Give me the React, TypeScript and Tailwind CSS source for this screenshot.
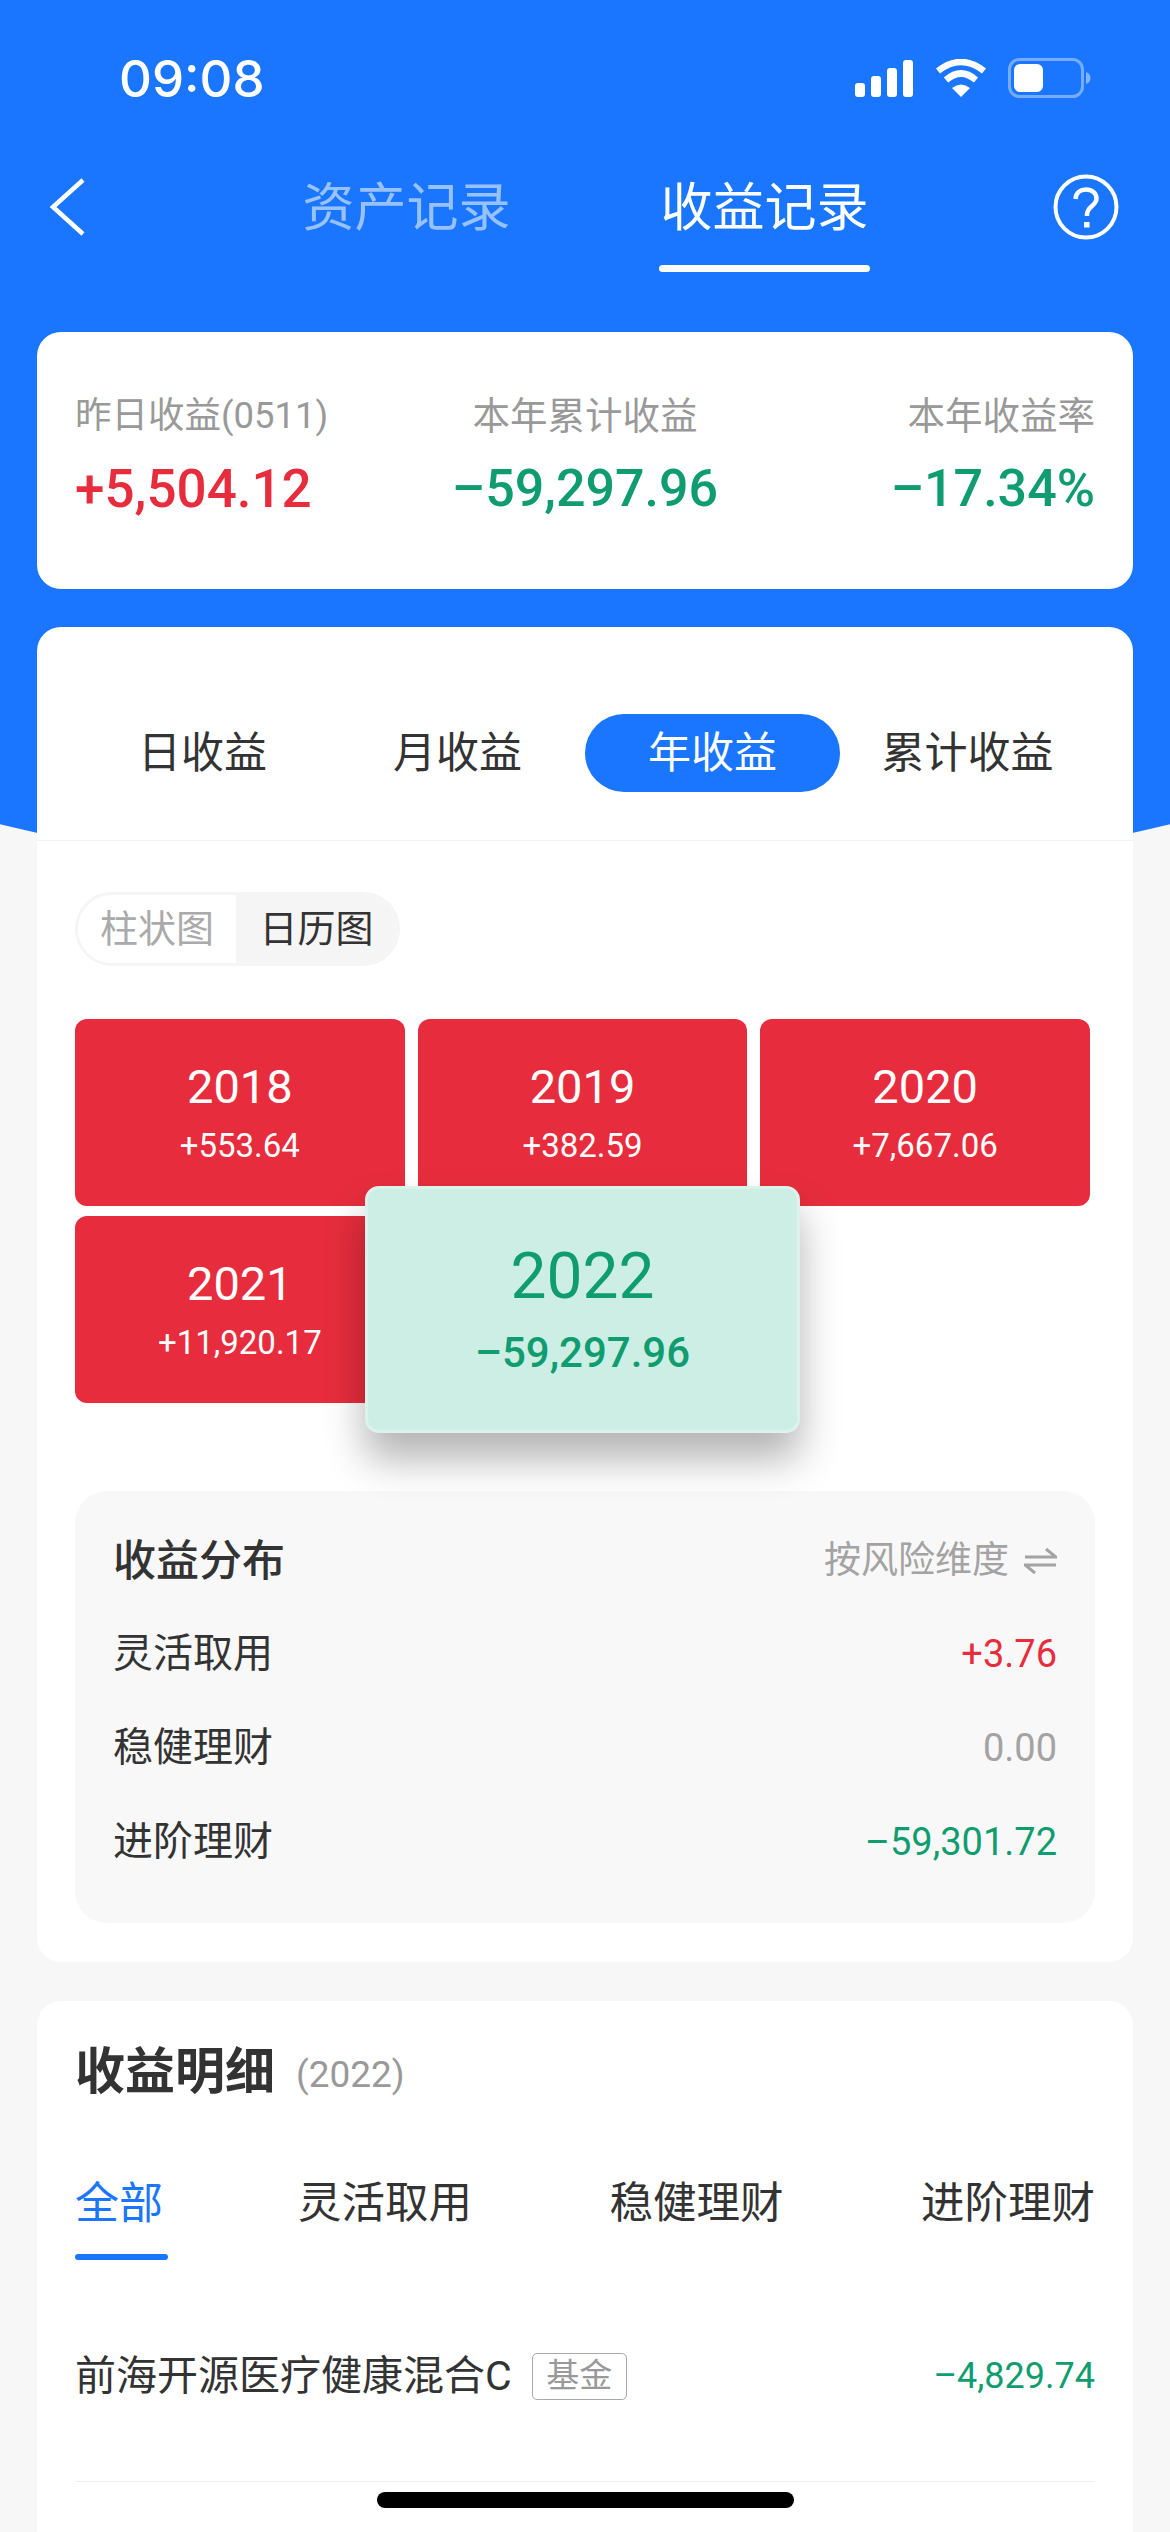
import React from "react";

const cjk = "font-['Roboto','Noto_Sans_CJK_SC',sans-serif]";

const years = [
  { year: "2018", value: "+553.64" },
  { year: "2019", value: "+382.59" },
  { year: "2020", value: "+7,667.06" },
  { year: "2021", value: "+11,920.17" },
];

const dist = [
  { name: "灵活取用", value: "+3.76", color: "text-[#e72d3d]" },
  { name: "稳健理财", value: "0.00", color: "text-[#a3a3a3]" },
  { name: "进阶理财", value: "–59,301.72", color: "text-[#0f9d70]" },
];

const StatusIcons = () => (
  <div className="flex items-center">
    <svg width="58" height="37" viewBox="0 0 58 37" fill="#fff">
      <rect x="0" y="23" width="10" height="14" rx="3" />
      <rect x="16" y="16" width="10" height="21" rx="3" />
      <rect x="32" y="8" width="10" height="29" rx="3" />
      <rect x="48" y="0" width="10" height="37" rx="3" />
    </svg>
    <svg className="ml-[22px]" width="52" height="38" viewBox="0 0 52 38" fill="none" stroke="#fff">
      <path d="M3 12Q26-6 49 12" strokeWidth="6.5" />
      <path d="M11 21Q26 8 41 21" strokeWidth="6.5" />
      <path d="M26 38L17 29Q26 22 35 29Z" fill="#fff" stroke="none" />
    </svg>
    <svg className="ml-[21px]" width="83" height="40" viewBox="0 0 83 40" fill="none">
      <rect x="1.5" y="1.5" width="73" height="37" rx="10" stroke="#fff" strokeOpacity="0.4" strokeWidth="3" />
      <rect x="6" y="6" width="29" height="28" rx="6" fill="#fff" />
      <path d="M78 14C81 15 82.500 17 82.500 20C82.500 23 81 25 78 26Z" fill="#fff" fillOpacity="0.45" />
    </svg>
  </div>
);

const Header = () => (
  <div>
    <div className="flex h-[156px] items-center justify-between pl-[119px] pr-[79px]">
      <span className="font-['Inter',sans-serif] text-[51px] font-medium leading-none text-white">09:08</span>
      <StatusIcons />
    </div>
    <div className="relative flex h-[126px] items-start pt-[2px]">
      <svg className="ml-[49px] mt-[20px]" width="37" height="58" viewBox="0 0 37 58" fill="none" stroke="#fff" strokeWidth="4.500">
        <path d="M34 2L4 29L34 56" />
      </svg>
      <div className="ml-[215px] flex w-[211px] justify-center pt-[18px] text-[52px] leading-[66px] text-white/55">
        资产记录
      </div>
      <div className="ml-[147px] flex w-[211px] flex-col items-center pt-[18px]">
        <span className="text-[52px] leading-[66px] text-white">收益记录</span>
        <div className="mt-[23px] h-[7px] w-[211px] shrink-0 rounded-full bg-white" />
      </div>
      <svg className="ml-[183px] mt-[16px]" width="66" height="66" viewBox="0 0 66 66" fill="none" stroke="#fff" strokeWidth="4">
        <circle cx="33" cy="33" r="30.500" />
        <path d="M22.500 25C23 18.500 27.500 15.500 33 15.500C39 15.500 43.500 19 43.500 24.500C43.500 32 34 32 34 40.500V42" strokeWidth="4.500" />
        <rect x="31" y="48" width="5.500" height="5.500" fill="#fff" stroke="none" />
      </svg>
    </div>
  </div>
);

const Summary = () => (
  <div className="mx-[37px] grid h-[257px] grid-cols-3 rounded-[24px] bg-white px-[38px] pt-[59px]">
    <div>
      <div className="text-[36.500px] leading-[50px] text-[#999]">昨日收益(0511)</div>
      <div className="mt-[17px] text-[53px] font-medium leading-[62px] text-[#e72d3d]">+5,504.12</div>
    </div>
    <div className="text-center">
      <div className="text-[37.500px] leading-[50px] text-[#999]">本年累计收益</div>
      <div className="mt-[17px] text-[52px] font-medium leading-[62px] text-[#0f9d70]">–59,297.96</div>
    </div>
    <div className="text-right">
      <div className="text-[37.500px] leading-[50px] text-[#999]">本年收益率</div>
      <div className="mt-[17px] text-[52px] font-medium leading-[62px] text-[#0f9d70]">–17.34%</div>
    </div>
  </div>
);

const PeriodTabs = () => (
  <div className="grid h-[214px] grid-cols-4 border-b border-[#f2f2f2] px-[38px] pt-[87px]">
    {["日收益", "月收益", "年收益", "累计收益"].map((t) => (
      <div
        key={t}
        className={`flex h-[78px] items-center justify-center rounded-full text-[43px] ${
          t === "年收益" ? "bg-[#1a76ff] text-white" : "text-[#333]"
        }`}
      >
        {t}
      </div>
    ))}
  </div>
);

const YearGrid = () => (
  <div className="relative mx-[38px] mt-[53px] grid w-[1015px] grid-cols-3 gap-x-[13px] gap-y-[10px]">
    {years.map((y) => (
      <div key={y.year} className="flex h-[187px] flex-col items-center rounded-[12px] bg-[#e72d3d] pt-[40px] text-white">
        <span className="text-[47px] leading-[56px]">{y.year}</span>
        <span className="mt-[11px] text-[33px] leading-[40px]">{y.value}</span>
      </div>
    ))}
    <div className="absolute left-[290px] top-[167px] flex h-[247px] w-[435px] flex-col items-center rounded-[14px] border-[3px] border-[#dcf3ec] bg-[#cdeee4] pt-[50px] text-[#0f9d70] shadow-[0_26px_40px_rgba(0,0,0,0.3)]">
      <span className="text-[64px] leading-[76px]">2022</span>
      <span className="mt-[13px] text-[42px] font-medium leading-[50px]">–59,297.96</span>
    </div>
  </div>
);

const Distribution = () => (
  <div className="mx-[38px] mt-[88px] h-[432px] rounded-[32px] bg-[#f8f8f8] px-[38px] pt-[40px]">
    <div className="flex items-center justify-between">
      <span className="text-[43px] font-medium leading-[60px] text-[#333]">收益分布</span>
      <span className="flex items-center text-[37px] leading-[60px] text-[#a3a3a3]">
        按风险维度
        <svg className="ml-[15px]" width="33" height="28" viewBox="0 0 33 28" fill="none" stroke="#a3a3a3" strokeWidth="3">
          <path d="M1 10H32L22 2" />
          <path d="M32 18H1L11 26" />
        </svg>
      </span>
    </div>
    <div className="mt-[33px] flex flex-col gap-[34px]">
      {dist.map((d) => (
        <div key={d.name} className="flex h-[60px] items-center justify-between">
          <span className="text-[40px] text-[#333]">{d.name}</span>
          <span className={`text-[38px] ${d.color}`}>{d.value}</span>
        </div>
      ))}
    </div>
  </div>
);

const Detail = () => (
  <div className="mx-[37px] mt-[39px] h-[600px] rounded-t-[24px] bg-white px-[38px] pt-[36px]">
    <div className="flex items-center">
      <span className="text-[50px] font-bold leading-[70px] text-[#333]">收益明细</span>
      <span className="ml-[21px] mt-[6px] text-[37px] text-[#999]">(2022)</span>
    </div>
    <div className="mt-[66px] flex">
      <div className="flex w-[93px] flex-col">
        <span className="text-[44px] leading-[62px] text-[#1a76ff]">全部</span>
        <div className="mt-[19px] h-[6px] rounded-full bg-[#1a76ff]" />
      </div>
      <div className="ml-[130px] flex flex-1 justify-between">
        {["灵活取用", "稳健理财", "进阶理财"].map((t) => (
          <span key={t} className="text-[43.500px] leading-[62px] text-[#333]">
            {t}
          </span>
        ))}
      </div>
    </div>
    <div className="mt-[88px] flex items-center justify-between">
      <div className="flex items-center">
        <span className="text-[41px] leading-[56px] text-[#333]">前海开源医疗健康混合C</span>
        <span className="ml-[20px] flex h-[47px] w-[95px] items-center justify-center rounded-[5px] border border-[#aaa] text-[33px] text-[#999]">
          基金
        </span>
      </div>
      <span className="text-[36px] text-[#0f9d70]">–4,829.74</span>
    </div>
    <div className="mt-[77px] h-px w-[1020px] bg-[#f0f0f0]" />
  </div>
);

export default function App() {
  return (
    <div className={`relative h-[2532px] w-[1170px] overflow-hidden bg-[#f7f7f7] ${cjk}`}>
      {/* blue backdrop with the curved bottom edge */}
      <div className="absolute -left-[1000px] top-[-1028px] h-[1920px] w-[3170px] rounded-[50%] bg-[#1a76ff]" />
      <div className="relative">
        <Header />
        <div className="pt-[50px]">
          <Summary />
          <div className="mx-[37px] mt-[38px] h-[1335px] rounded-[24px] bg-white">
            <PeriodTabs />
            <div className="mx-[38px] mt-[51px] flex h-[74px] w-[325px] overflow-hidden rounded-full border-[3px] border-[#f5f5f5] text-[38px]">
              <div className="flex w-[158px] items-center justify-center bg-white text-[#aaa]">柱状图</div>
              <div className="flex flex-1 items-center justify-center bg-[#f5f5f5] text-[#333]">日历图</div>
            </div>
            <YearGrid />
            <Distribution />
          </div>
          <Detail />
        </div>
      </div>
      <div className="absolute left-[377px] top-[2492px] h-[16px] w-[417px] rounded-full bg-black" />
    </div>
  );
}
